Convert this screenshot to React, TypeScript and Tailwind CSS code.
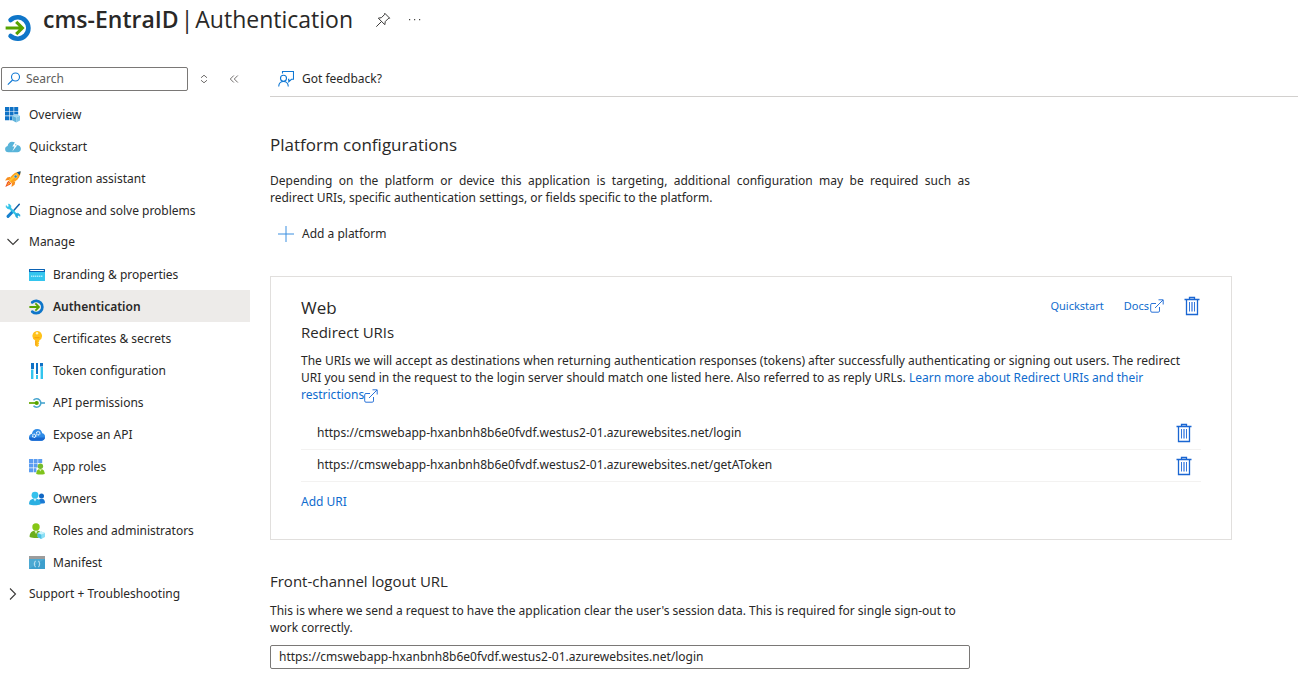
import type { ReactNode } from 'react';

type IconProps = { className?: string };

function AuthIcon({ className = 'size-4' }: IconProps) {
  return (
    <svg viewBox="0 0 18 18" className={className} fill="none" aria-hidden="true">
      <path d="M3.6 3.800A6.900 6.900 0 1 1 3.6 14.200" stroke="#0f76c9" strokeWidth="3" strokeLinecap="round" />
      <path d="M0.4 9H10.600M7.200 5L11.200 9L7.200 13" stroke="#57a300" strokeWidth="2" />
    </svg>
  );
}

function OverviewIcon() {
  return (
    <svg viewBox="0 0 16 16" className="size-4" aria-hidden="true">
      <path fill="#0f72c6" d="M0 0h4v4H0zM4.600 0h4v4h-4zM9.200 0h4v4h-4zM0 4.600h4v4H0zM4.600 4.600h4v4h-4zM9.200 4.600h4v3h-4zM0 9.200h4v4H0zM4.600 9.200h2.800v4H4.600z" />
      <path fill="#9fd6ef" d="M11.200 7.200l3.800 1.600-3.800 1.700-3.800-1.700z" />
      <path fill="#5fb2da" d="M7.400 8.800l3.800 1.700v5l-3.800-1.900z" />
      <path fill="#7cc4e6" d="M15 8.800l-3.800 1.700v5l3.800-1.900z" />
    </svg>
  );
}

function QuickstartIcon() {
  return (
    <svg viewBox="0 0 16 16" className="size-4" aria-hidden="true">
      <path fill="#59b4d9" d="M3.400 13.200A3.300 3.300 0 0 1 .1 10c0-1.600 1-2.800 2.500-3.100C3 4.400 4.700 2.700 7 2.700c2.300 0 3.700 1.200 4.500 3.200 2.600 0 4.400 1.500 4.400 3.800 0 2-1.500 3.500-3.500 3.500z" />
      <path fill="#fff" d="M10.600 2.200L7.300 7.400h2.200L7.300 12.600l5-6.400H9.900l2.800-4z" />
    </svg>
  );
}

function RocketIcon() {
  return (
    <svg viewBox="0 0 16 16" className="size-4" aria-hidden="true">
      <path fill="#f78d1e" d="M5.600 5.800L2.200 6.500 0 9.600l4.300-.5zM10.300 10.500l-.7 3.300-3.100 2.200.5-4.400z" />
      <path fill="#fea11b" d="M15.600.4c-4.600.3-7.600 2.300-9.600 5.100L3.800 9.300l2.900 2.900 3.900-2.200c2.800-2 4.800-5 5-9.600z" />
      <path fill="#ffc531" d="M15.600.4C12 2 8 5 3.800 9.300l1.400 1.400C9 7 13 3.500 15.600.4z" />
      <path fill="#0b5c9e" d="M15.700.3l-4 .9 3.100 3.100z" />
      <circle cx="10.600" cy="5.500" r="1.500" fill="#2d7fc1" stroke="#ffe28a" strokeWidth=".5" />
      <path fill="#ee4e23" d="M3.600 9.700l2.700 2.700-1.500 1.400L.3 15.900l2-4.700z" />
      <path fill="#ffb52b" d="M3.800 11l1.200 1.200-3.400 2.700z" />
    </svg>
  );
}

function ToolsIcon() {
  return (
    <svg viewBox="0 0 16 16" className="size-4" fill="none" aria-hidden="true">
      <path d="M14.300 1.300L9.200 7" stroke="#0f5fa8" strokeWidth="1.500" strokeLinecap="round" />
      <path d="M8 8.300L3 13.400" stroke="#1681cf" strokeWidth="3" strokeLinecap="round" />
      <path d="M4 4.300l8.600 8.700" stroke="#32c3e8" strokeWidth="2.200" />
      <path d="M1.100 2.600A2.700 2.700 0 0 0 5.400 5.300 2.700 2.700 0 0 0 3.500 1L4 3.400 2.700 4z" fill="#32c3e8" stroke="#32c3e8" strokeWidth=".6" />
      <path d="M15 13.300a2.500 2.500 0 0 0-3.900-2.500 2.500 2.500 0 0 0 1.800 4.100l-.7-2 1-.7z" fill="#25a9dc" stroke="#25a9dc" strokeWidth=".6" />
    </svg>
  );
}

function BrandingIcon() {
  return (
    <svg viewBox="0 0 16 16" className="size-4" aria-hidden="true">
      <rect x="0" y="2" width="16" height="12" rx=".6" fill="#33c5ee" />
      <path fill="#0b62b4" d="M.6 2h14.800a.6.600 0 0 1 .6.600V5H0V2.600A.6.600 0 0 1 .6 2z" />
      <path fill="#fff" d="M1.200 3h13.600v1H1.200z" />
      <path stroke="#a9ebfd" strokeWidth="1.600" strokeDasharray="1.400 .6" d="M2 9.300h12" />
    </svg>
  );
}

function KeyIcon() {
  return (
    <svg viewBox="0 0 16 16" className="size-4" aria-hidden="true">
      <path fill="#ffc21a" d="M8 0a5 5 0 0 1 2.200 9.500v1.200l-.9.900.9 1-.9.900.7.900L8 16l-1.700-1.700V9.500A5 5 0 0 1 8 0z" />
      <path fill="#f59b0b" d="M6.300 9.500h1v5.700l-1-.9zM5.500 6.300h5v.9h-5z" />
      <circle cx="8" cy="2.300" r="1.200" fill="#fff4c7" />
    </svg>
  );
}

function TokenIcon() {
  return (
    <svg viewBox="0 0 16 16" className="size-4" aria-hidden="true">
      <path fill="#0f72c6" d="M2 0h3v6H2zM7 0h2v11H7zM11 0h3v3.500h-3z" />
      <path fill="#33c5ee" d="M2 6.500h2v9.500H2zM7 12h2v4H7zM12 4h2v12h-2z" />
      <path fill="#a7e8fa" d="M4 6.500h1v9.500H4zM11 4h1v12h-1z" />
    </svg>
  );
}

function PermissionsIcon() {
  return (
    <svg viewBox="0 0 16 16" className="size-4" fill="none" aria-hidden="true">
      <path d="M4.500 5.200a4.200 4.200 0 1 1 0 5.600" stroke="#48a5cf" strokeWidth="1.500" />
      <path d="M12 8h4" stroke="#48a5cf" strokeWidth="1.600" />
      <path d="M0 8h7" stroke="#6bab0d" strokeWidth="1.800" />
      <circle cx="7.700" cy="8" r="2.100" fill="#57a300" />
    </svg>
  );
}

function ExposeIcon() {
  return (
    <svg viewBox="0 0 16 16" className="size-4" aria-hidden="true">
      <path fill="#2f8be6" d="M3.700 13.800A3.600 3.600 0 0 1 0 10.300C0 8.500 1.300 7 3 6.800 3.300 4 5.500 2 8.200 2c2.700 0 4.500 1.600 5 4.200 1.700.2 2.900 1.700 2.900 3.600 0 2.300-1.600 4-3.800 4z" />
      <path fill="#1767cf" d="M0 10.500h16c-.2 1.900-1.700 3.300-3.700 3.300H3.700A3.600 3.600 0 0 1 0 10.500z" />
      <circle cx="9.200" cy="6.200" r="1.700" fill="none" stroke="#e5f3ff" strokeWidth="1.300" strokeDasharray="1.200 .4" />
      <circle cx="5.200" cy="8.800" r="1.600" fill="none" stroke="#e5f3ff" strokeWidth="1.300" strokeDasharray="1.200 .4" />
    </svg>
  );
}

function AppRolesIcon() {
  return (
    <svg viewBox="0 0 16 16" className="size-4" aria-hidden="true">
      <path fill="#5a9cf0" d="M0 0h4v4H0zM4.600 0h4v4h-4zM9.200 0h4v4h-4zM0 4.600h4v4H0zM4.600 4.600h4v4h-4zM0 9.200h4v4H0zM4.600 9.200h2.800v4H4.600z" />
      <circle cx="11.400" cy="7.300" r="2.700" fill="#76bc2d" />
      <path fill="#7fc31c" d="M7.200 15c0-2.900 1.500-4.900 4.200-4.900s4.400 2 4.400 4.900c-2.600.8-6 .8-8.600 0z" />
      <path fill="#d9f2b4" d="M10 10.200h2.800l-1.400 2.300z" />
    </svg>
  );
}

function OwnersIcon() {
  return (
    <svg viewBox="0 0 16 16" className="size-4" aria-hidden="true">
      <circle cx="12.500" cy="4.900" r="2.500" fill="#1268c4" />
      <path fill="#1a7ad4" d="M9 12.600c0-3 1-4.800 3.600-4.800S16 9.600 16 12.100c-1 .5-4 .9-7 .5z" />
      <circle cx="6" cy="4.200" r="3.400" fill="#35c1ec" />
      <path fill="#2bb0e2" d="M0 13.300C0 9.800 2 7.600 6 7.600s5.600 2.200 5.600 5.700c-3 1.300-8.600 1.300-11.600 0z" />
      <path fill="#c8f2ff" d="M4.300 7.700h3.400L6 10.500z" />
    </svg>
  );
}

function RolesIcon() {
  return (
    <svg viewBox="0 0 16 16" className="size-4" aria-hidden="true">
      <circle cx="7" cy="4" r="3.700" fill="#86c716" />
      <path fill="#6bae1c" d="M.6 14C.6 10.200 2.600 7.600 7 7.600s6.200 2.600 6.200 6.400c-3.600 1.300-9 1.300-12.600 0z" />
      <path fill="#e2f5c2" d="M5.300 7.700h3.400L7 11z" />
      <path fill="#8adff5" d="M12.300 8.500L16 10v4l-3.700 2-3.700-2v-4z" />
      <path fill="#4dbfe4" d="M8.600 10l3.700 1.600V16l-3.700-2z" />
      <path fill="#c8f3fc" d="M12.300 8.500L16 10l-3.700 1.600L8.600 10z" />
    </svg>
  );
}

function ManifestIcon() {
  return (
    <svg viewBox="0 0 16 16" className="size-4" fill="none" aria-hidden="true">
      <path fill="#3d9fcd" d="M0 4h16v10H0z" />
      <path fill="#59b4d9" d="M0 4h16L0 14z" opacity=".5" />
      <path fill="#9c9c9c" d="M0 1h16v3H0z" />
      <path d="M6.700 6.300c-1 0-1 .4-1 1.200s0 1.200-.8 1.400c.8.200.8.600.8 1.500s0 1.300 1 1.300M9.300 6.300c1 0 1 .4 1 1.200s0 1.200.8 1.400c-.8.200-.8.600-.8 1.500s0 1.300-1 1.300" stroke="#e9f6fc" strokeWidth=".9" />
    </svg>
  );
}

function TrashIcon() {
  return (
    <svg viewBox="0 0 16 20" className="h-5 w-4" fill="none" aria-hidden="true">
      <path d="M.5 3.500h15M5.500 3V1.500h5V3M2.500 3.500v15h11v-15" stroke="#1a66d2" strokeWidth="1.300" />
      <path d="M5.500 6v9.500" stroke="#3477da" />
      <path d="M8 6v9.500" stroke="#7fa9ec" strokeWidth="2" />
      <path d="M10.500 6v9.500" stroke="#3477da" />
    </svg>
  );
}

function ExternalIcon() {
  return (
    <svg viewBox="0 0 14 14" className="inline size-3.5 align-text-bottom" fill="none" stroke="#2a73d8" aria-hidden="true">
      <path d="M6 4.500H2a1.300 1.300 0 0 0-1.300 1.300v6.100a1.300 1.300 0 0 0 1.300 1.300h6.200a1.300 1.300 0 0 0 1.300-1.300V8M5 9l8-8M8.500.8h4.700v4.700" />
    </svg>
  );
}

function Chevron({ open }: { open: boolean }) {
  return (
    <svg viewBox="0 0 16 16" className="size-4" fill="none" stroke="#3b3a39" strokeWidth="1.100" aria-hidden="true">
      <path d={open ? 'M2.500 5l5.500 5.500L13.500 5' : 'M5 2.500L10.500 8 5 13.500'} />
    </svg>
  );
}

type NavEntry = { label: string; icon: ReactNode };

const topItems: NavEntry[] = [
  { label: 'Overview', icon: <OverviewIcon /> },
  { label: 'Quickstart', icon: <QuickstartIcon /> },
  { label: 'Integration assistant', icon: <RocketIcon /> },
  { label: 'Diagnose and solve problems', icon: <ToolsIcon /> },
];

const manageItems: NavEntry[] = [
  { label: 'Branding & properties', icon: <BrandingIcon /> },
  { label: 'Authentication', icon: <AuthIcon /> },
  { label: 'Certificates & secrets', icon: <KeyIcon /> },
  { label: 'Token configuration', icon: <TokenIcon /> },
  { label: 'API permissions', icon: <PermissionsIcon /> },
  { label: 'Expose an API', icon: <ExposeIcon /> },
  { label: 'App roles', icon: <AppRolesIcon /> },
  { label: 'Owners', icon: <OwnersIcon /> },
  { label: 'Roles and administrators', icon: <RolesIcon /> },
  { label: 'Manifest', icon: <ManifestIcon /> },
];

const redirectUris = [
  'https://cmswebapp-hxanbnh8b6e0fvdf.westus2-01.azurewebsites.net/login',
  'https://cmswebapp-hxanbnh8b6e0fvdf.westus2-01.azurewebsites.net/getAToken',
];

function NavLink({ entry, nested, active }: { entry: NavEntry; nested?: boolean; active?: boolean }) {
  return (
    <li>
      <a
        href="#"
        aria-current={active ? 'page' : undefined}
        className={`flex h-8 items-center gap-2 pt-0.5 ${nested ? 'pl-[29px]' : 'pl-[5px]'} ${active ? 'bg-[#edebe9] font-semibold' : ''}`}
      >
        {entry.icon}
        {entry.label}
      </a>
    </li>
  );
}

function NavGroup({ label, open }: { label: string; open: boolean }) {
  return (
    <button type="button" aria-expanded={open} className="flex h-8 w-full items-center gap-2 pl-[5px]">
      <Chevron open={open} />
      {label}
    </button>
  );
}

function Sidebar() {
  return (
    <aside className="w-[250px] shrink-0 pt-[9px]">
      <div className="mb-[7px] flex items-center pl-px">
        <label className="flex h-6 w-[187px] items-center gap-1 rounded-xs border border-[#7a7876] pl-1">
          <svg viewBox="0 0 16 16" className="size-4" fill="none" stroke="#0f78d4" strokeWidth="1.100" aria-hidden="true">
            <circle cx="9.500" cy="6" r="4" />
            <path d="M6.600 9L1.800 13.600" />
          </svg>
          <input type="search" aria-label="Search" placeholder="Search" className="min-w-0 flex-1 bg-transparent outline-none placeholder:text-[#605e5c]" />
        </label>
        <button type="button" aria-label="Expand or collapse all" className="ml-2 flex size-4 items-center justify-center">
          <svg viewBox="0 0 10 10" className="size-2.5" fill="none" stroke="#605e5c" strokeWidth=".9" aria-hidden="true">
            <path d="M2 3.800l3-2.600 3 2.600M2 6.200l3 2.600 3-2.600" />
          </svg>
        </button>
        <button type="button" aria-label="Collapse menu" className="ml-3.5 flex size-4 items-center justify-center">
          <svg viewBox="0 0 10 10" className="size-2.5" fill="none" stroke="#605e5c" strokeWidth=".9" aria-hidden="true">
            <path d="M4.800 1.500L1.300 5l3.500 3.500M8.800 1.500L5.300 5l3.500 3.500" />
          </svg>
        </button>
      </div>
      <nav aria-label="Application">
        <ul>
          {topItems.map((entry) => (
            <NavLink key={entry.label} entry={entry} />
          ))}
        </ul>
        <NavGroup label="Manage" open />
        <ul>
          {manageItems.map((entry) => (
            <NavLink key={entry.label} entry={entry} nested active={entry.label === 'Authentication'} />
          ))}
        </ul>
        <NavGroup label="Support + Troubleshooting" open={false} />
      </nav>
    </aside>
  );
}

function WebPlatformCard() {
  return (
    <section className="mt-8 border border-[#e1dfdd] px-[30px] pt-[19px] pb-[27px]">
      <div className="flex items-start justify-between">
        <div>
          <h3 className="font-['Open_Sans',sans-serif] text-[17px] leading-6">Web</h3>
          <h4 className="font-['Open_Sans',sans-serif] text-[15px] leading-6">Redirect URIs</h4>
        </div>
        <div className="flex h-5 items-center gap-5 pr-px text-[11px] text-[#0f6cce]">
          <a href="#">Quickstart</a>
          <a href="#" className="flex items-center gap-px">
            Docs
            <ExternalIcon />
          </a>
          <button type="button" aria-label="Delete Web platform">
            <TrashIcon />
          </button>
        </div>
      </div>
      <p className="mt-2 pr-2 leading-[17px]">
        The URIs we will accept as destinations when returning authentication responses (tokens) after successfully authenticating or signing out users. The redirect URI you send in the request to the login server should match one listed here. Also referred to as reply URLs.{' '}
        <a href="#" className="text-[#0f6cce]">
          Learn more about Redirect URIs and their restrictions
          <ExternalIcon />
        </a>
      </p>
      <table aria-label="Redirect URIs" className="mt-3.5 w-full">
        <tbody>
          {redirectUris.map((uri) => (
            <tr key={uri} className="h-8 border-b border-[#f3f2f1]">
              <td className="pl-4">{uri}</td>
              <td className="w-8 pt-px pr-[9px]">
                <button type="button" aria-label={`Delete ${uri}`} className="ml-auto block">
                  <TrashIcon />
                </button>
              </td>
            </tr>
          ))}
        </tbody>
      </table>
      <button type="button" className="mt-2.5 block leading-5 text-[#0f6cce]">
        Add URI
      </button>
    </section>
  );
}

export default function App() {
  return (
    <div className="bg-white font-['Noto_Sans','Open_Sans',sans-serif] text-[12px] text-[#292827]">
      <header className="flex h-[58px] items-start pl-[5px]">
        <AuthIcon className="mt-[14px] size-7" />
        <h1 className="ml-2.5 flex gap-0.5 pt-[3px] font-['Open_Sans',sans-serif] text-[23px] leading-8">
          <span className="font-semibold">cms-EntraID</span>
          <span>|</span>
          <span>Authentication</span>
        </h1>
        <button type="button" aria-label="Pin" className="mt-3 ml-[22px]">
          <svg viewBox="0 0 16 16" className="size-4" fill="none" stroke="#3b3a39" aria-hidden="true">
            <path d="M9.800 1.300l4.900 4.900-1.500.4-2.900 2.900-.5 3.200-6.500-6.500 3.200-.6 2.900-2.900zM6.500 9.500L1.300 14.700" />
          </svg>
        </button>
        <button type="button" aria-label="More" className="mt-3 ml-4">
          <svg viewBox="0 0 16 16" className="size-4" fill="#4a4846" aria-hidden="true">
            <path d="M2 7h1.200v1.200H2zM7 7h1.200v1.200H7zM12 7h1.200v1.200H12z" />
          </svg>
        </button>
      </header>
      <div className="flex">
        <Sidebar />
        <main className="min-w-0 flex-1 pl-5">
          <div className="flex h-[39px] items-center border-b border-[#d2d0ce] pt-1 pl-2">
            <button type="button" className="flex items-center gap-2">
              <svg viewBox="0 0 16 16" className="size-4" fill="none" stroke="#0f78d4" strokeWidth="1.100" aria-hidden="true">
                <circle cx="5.500" cy="7.300" r="3" />
                <path d="M.7 15.500c.2-3 2-5 4.800-5s4.600 2 4.800 5M4.500 2.500v-2h11v7.800h-2l-2.700 2.400V8.300H10" />
              </svg>
              Got feedback?
            </button>
          </div>
          <div className="pr-[66px]">
            <h2 className="mt-9 font-['Open_Sans',sans-serif] text-[17px] leading-6">Platform configurations</h2>
            <p className="mt-[15px] max-w-[700px] text-justify leading-[17px]">
              Depending on the platform or device this application is targeting, additional configuration may be required such as redirect&nbsp;URIs, specific authentication settings, or fields specific to the platform.
            </p>
            <button type="button" className="mt-[18px] flex items-center gap-2 pl-2 leading-5">
              <svg viewBox="0 0 16 16" className="size-4" stroke="#3a8fe0" aria-hidden="true">
                <path d="M8 0v16M0 8h16" />
              </svg>
              Add a platform
            </button>
            <WebPlatformCard />
            <h2 className="mt-[29px] font-['Open_Sans',sans-serif] text-[15px] leading-6">
              <label htmlFor="logout-url">Front-channel logout URL</label>
            </h2>
            <p className="mt-[9px] max-w-[700px] leading-[17px]">
              This is where we send a request to have the application clear the user's session data. This is required for single sign-out to work correctly.
            </p>
            <input
              id="logout-url"
              type="url"
              defaultValue={redirectUris[0]}
              className="mt-[9px] block h-6 w-full max-w-[700px] rounded-xs border border-[#7a7876] px-2 outline-none"
            />
          </div>
        </main>
      </div>
    </div>
  );
}
